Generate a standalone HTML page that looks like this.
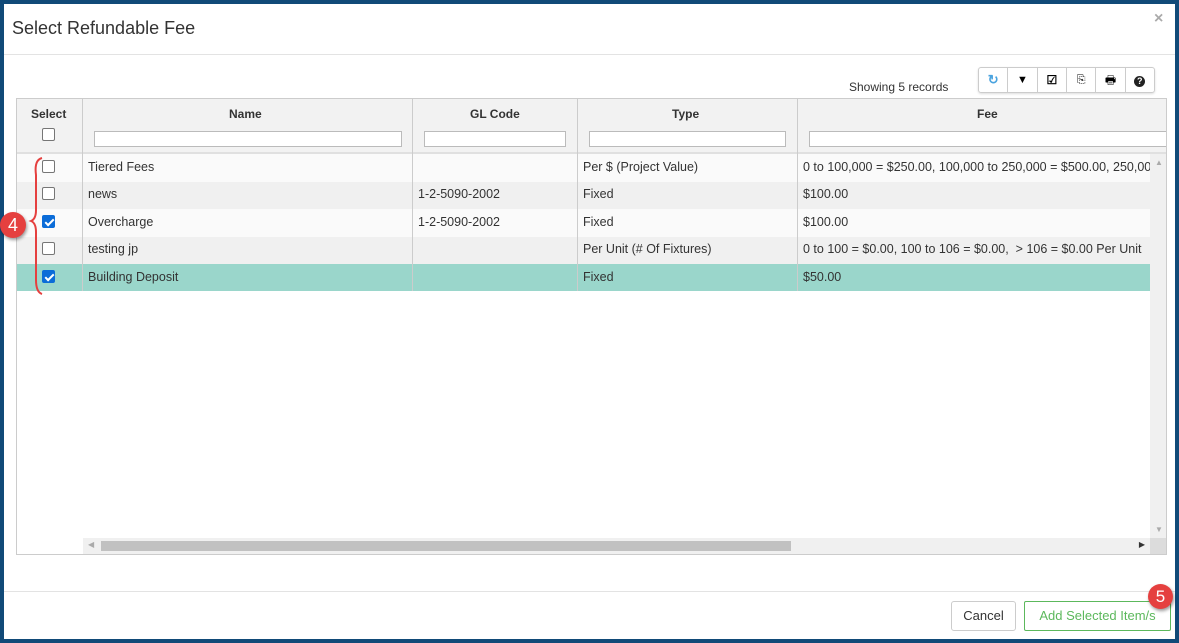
<!DOCTYPE html><html><head><style>
*{box-sizing:border-box}body{margin:0;width:1179px;height:643px;background:#114a78;font-family:"Liberation Sans",sans-serif;overflow:hidden;position:relative}
.m{position:absolute;left:4px;top:4px;width:1171px;height:635px;background:#fff}
.a{position:absolute}
.t{font-size:12.5px;color:#333}
.cb{position:absolute;width:13px;height:13px;border:1px solid #767676;border-radius:2px;background:#fff}
.cb.on{background:#0b6cd8;border-color:#0b6cd8}
.cb.on:after{content:"";position:absolute;left:3.5px;top:0.5px;width:3px;height:7px;border:solid #fff;border-width:0 2px 2px 0;transform:rotate(45deg)}
.in{position:absolute;top:32px;height:16px;border:1px solid #bbb;background:#fff}
</style></head><body>
<div class="m"></div>
<div class="a" style="left:12px;top:18px;font-size:18px;color:#333">Select Refundable Fee</div>
<div class="a" style="left:1154px;top:10px;font-size:16px;color:#aaa;font-weight:bold">×</div>
<div class="a" style="left:4px;top:54px;width:1171px;height:1px;background:#e3e3e3"></div>
<div class="a t" style="left:849px;top:80px;font-size:12px">Showing 5 records</div>
<div class="a" style="left:978px;top:67px;width:177px;height:26px;border:1px solid #ccc;border-radius:3px;display:flex;box-shadow:0 1px 2px #ddd">
<div style="flex:1;border-right:1px solid #ccc;text-align:center;color:#4aa3df;font-size:13px;line-height:24px;font-weight:bold">↻</div>
<div style="flex:1;border-right:1px solid #ccc;text-align:center;font-size:11px;line-height:24px">▼</div>
<div style="flex:1;border-right:1px solid #ccc;text-align:center;font-size:12px;line-height:24px;font-weight:bold">☑</div>
<div style="flex:1;border-right:1px solid #ccc;text-align:center;font-size:11px;line-height:24px">⎘</div>
<div style="flex:1;border-right:1px solid #ccc;text-align:center;font-size:12px;line-height:24px">🖶</div>
<div style="flex:1;text-align:center;line-height:24px"><span style="display:inline-block;width:11px;height:11px;border-radius:50%;background:#222;color:#fff;font-size:9px;line-height:11px;font-weight:bold">?</span></div>
</div>
<div class="a" style="left:16px;top:98px;width:1151px;height:457px;border:1px solid #ccc;background:#fff;overflow:hidden">
<div class="a" style="left:0;top:0;width:1151px;height:54px;background:#f2f2f2;border-bottom:1px solid #ccc"></div>
<div class="a" style="left:0;top:53px;width:1151px;height:2px;background:#e0e0e0"></div>
<div class="a t" style="left:14px;top:8px;font-weight:bold;font-size:12px">Select</div>
<div class="cb" style="left:25px;top:29px"></div>
<div class="a t" style="left:212px;top:8px;font-weight:bold;font-size:12px">Name</div>
<div class="a t" style="left:453px;top:8px;font-weight:bold;font-size:12px">GL Code</div>
<div class="a t" style="left:655px;top:8px;font-weight:bold;font-size:12px">Type</div>
<div class="a t" style="left:960px;top:8px;font-weight:bold;font-size:12px">Fee</div>
<div class="in" style="left:77px;width:308px"></div>
<div class="in" style="left:407px;width:142px"></div>
<div class="in" style="left:572px;width:197px"></div>
<div class="in" style="left:792px;width:360px"></div>
<div class="a" style="left:0;top:55px;width:1133px;height:28px;background:#fafafa"></div>
<div class="a" style="left:0;top:83px;width:1133px;height:27px;background:#f0f0f0"></div>
<div class="a" style="left:0;top:110px;width:1133px;height:28px;background:#fafafa"></div>
<div class="a" style="left:0;top:138px;width:1133px;height:27px;background:#f0f0f0"></div>
<div class="a" style="left:0;top:165px;width:1133px;height:27px;background:#9ad6cb"></div>
<div class="a" style="left:65px;top:0;width:1px;height:192px;background:#ccc"></div>
<div class="a" style="left:395px;top:0;width:1px;height:192px;background:#ccc"></div>
<div class="a" style="left:560px;top:0;width:1px;height:192px;background:#ccc"></div>
<div class="a" style="left:780px;top:0;width:1px;height:192px;background:#ccc"></div>
<div class="cb" style="left:25px;top:61px"></div>
<div class="cb" style="left:25px;top:88px"></div>
<div class="cb on" style="left:25px;top:116px"></div>
<div class="cb" style="left:25px;top:143px"></div>
<div class="cb on" style="left:25px;top:171px"></div>
<div class="a t" style="left:71px;top:61px">Tiered Fees</div>
<div class="a t" style="left:71px;top:88px">news</div>
<div class="a t" style="left:71px;top:116px">Overcharge</div>
<div class="a t" style="left:71px;top:143px">testing jp</div>
<div class="a t" style="left:71px;top:171px">Building Deposit</div>
<div class="a t" style="left:401px;top:88px">1-2-5090-2002</div>
<div class="a t" style="left:401px;top:116px">1-2-5090-2002</div>
<div class="a t" style="left:566px;top:61px">Per $ (Project Value)</div>
<div class="a t" style="left:566px;top:88px">Fixed</div>
<div class="a t" style="left:566px;top:116px">Fixed</div>
<div class="a t" style="left:566px;top:143px">Per Unit (# Of Fixtures)</div>
<div class="a t" style="left:566px;top:171px">Fixed</div>
<div class="a t" style="left:786px;top:61px;width:347px;white-space:nowrap;overflow:hidden">0 to 100,000 = $250.00, 100,000 to 250,000 = $500.00, 250,000 to</div>
<div class="a t" style="left:786px;top:88px">$100.00</div>
<div class="a t" style="left:786px;top:116px">$100.00</div>
<div class="a t" style="left:786px;top:143px">0 to 100 = $0.00, 100 to 106 = $0.00,&nbsp; &gt; 106 = $0.00 Per Unit</div>
<div class="a t" style="left:786px;top:171px">$50.00</div>
<div class="a" style="left:1133px;top:55px;width:18px;height:384px;background:#f0f0f0;color:#aaa;font-size:8px;text-align:center"><div style="margin-top:4px">▲</div><div style="position:absolute;bottom:4px;width:18px">▼</div></div>
<div class="a" style="left:66px;top:439px;width:1067px;height:16px;background:#f0f0f0"><div class="a" style="left:18px;top:3px;width:690px;height:10px;background:#c1c1c1"></div><div class="a" style="left:5px;top:2px;font-size:8px;color:#aaa">◀</div><div class="a" style="right:5px;top:2px;font-size:8px;color:#333">▶</div></div>
<div class="a" style="left:1133px;top:439px;width:18px;height:16px;background:#dcdcdc"></div>
</div>
<svg class="a" style="left:28px;top:155px" width="20" height="142"><path d="M14 3 Q6 5 8 20 L8 55 Q8 64 3 66 Q8 68 8 77 L8 125 Q8 137 14 139" fill="none" stroke="#e5403f" stroke-width="2"/></svg>
<div class="a" style="left:0;top:212px;width:26px;height:26px;border-radius:50%;background:#e5403f;color:#fff;font-size:18px;text-align:center;line-height:26px;box-shadow:1px 2px 3px rgba(0,0,0,.4)">4</div>
<div class="a" style="left:4px;top:591px;width:1171px;height:1px;background:#e3e3e3"></div>
<div class="a" style="left:951px;top:601px;width:65px;height:30px;border:1px solid #ccc;border-radius:3px;font-size:13px;color:#333;text-align:center;line-height:28px">Cancel</div>
<div class="a" style="left:1024px;top:601px;width:147px;height:30px;border:1px solid #5cb85c;border-radius:2px;font-size:13px;color:#5cb85c;text-align:center;line-height:28px">Add Selected Item/s</div>
<div class="a" style="left:1148px;top:584px;width:25px;height:25px;border-radius:50%;background:#e5403f;color:#fff;font-size:17px;text-align:center;line-height:25px;box-shadow:1px 2px 3px rgba(0,0,0,.4)">5</div>
</body></html>
